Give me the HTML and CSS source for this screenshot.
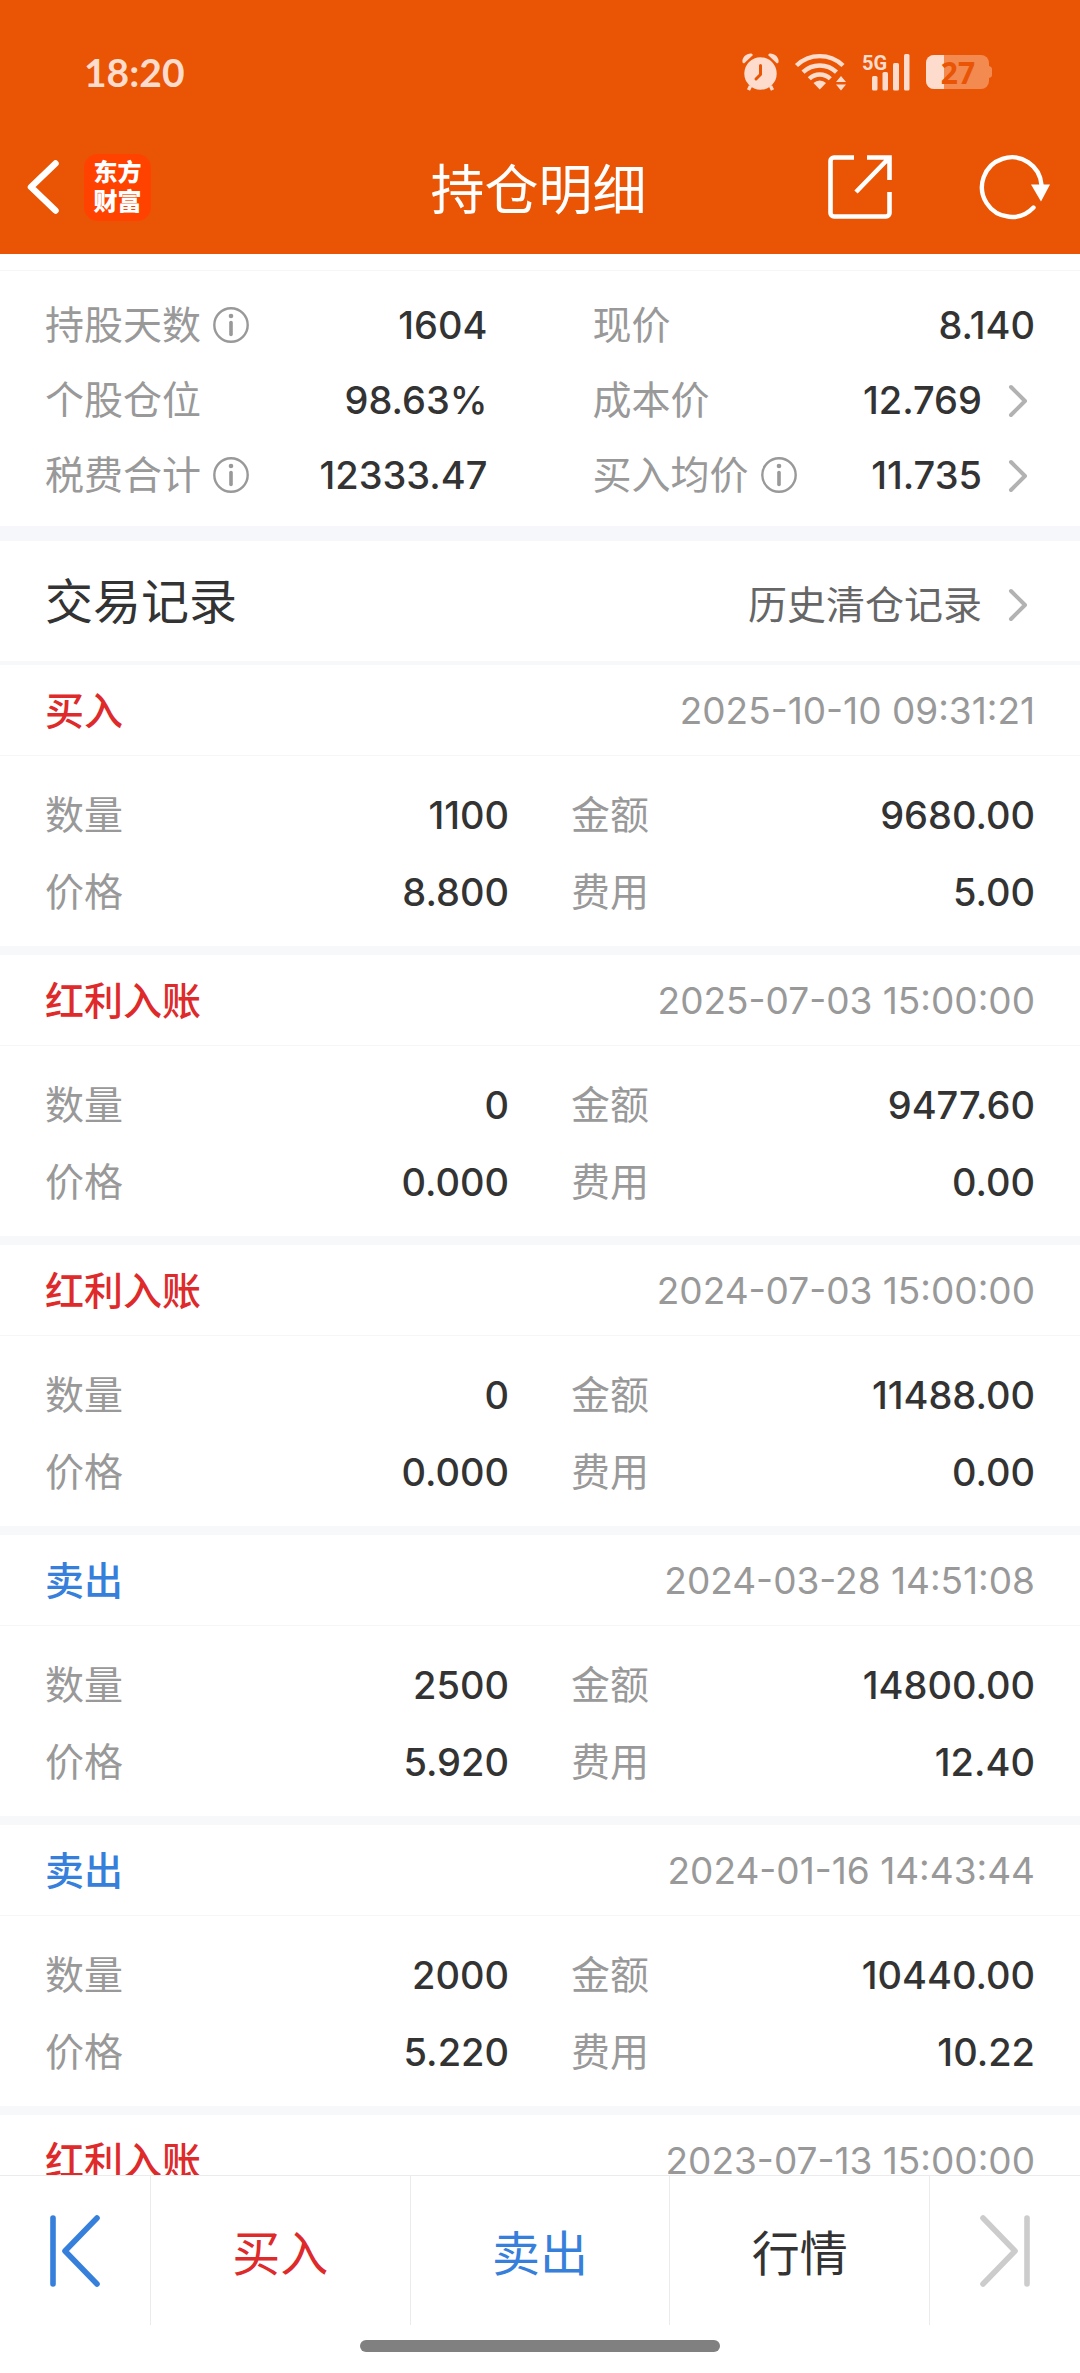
FILE: index.html
```html
<!DOCTYPE html>
<html lang="zh-CN">
  <head>
    <meta charset="UTF-8" />
    <meta name="viewport" content="width=device-width" />
    <title>持仓明细</title>
    <link rel="stylesheet" href="styles.css">
  </head>

  <body>
    <!-- shared icons -->
    <svg class="sprite" aria-hidden="true">
      <symbol id="info" viewBox="0 0 36 36">
        <circle cx="18" cy="18" r="16.7" fill="none" stroke="currentColor" stroke-width="2.4" />
        <circle cx="18" cy="9" r="2.3" fill="currentColor" />
        <path d="M18 15.5v12" stroke="currentColor" stroke-width="3.6" stroke-linecap="round" />
      </symbol>
      <symbol id="chevron" viewBox="0 0 20 34">
        <path d="M3 3l14 14L3 31" fill="none" stroke="currentColor" stroke-width="4" stroke-linecap="round" stroke-linejoin="round" />
      </symbol>
    </svg>

    <header class="header">
      <div class="status">
        <span class="time">18:20</span>
        <div class="status-icons">
          <svg width="37" height="38" viewBox="0 0 37 38">
            <g fill="currentColor">
              <circle cx="18.500" cy="20.500" r="16.200" />
              <path d="M0.500 9.500C-0.500 4 5 0 9.500 0.500L11 2 2 10.500z" />
              <path d="M36.500 9.500C37.500 4 32 0 27.500 0.500L26 2 35 10.500z" />
            </g>
            <path d="M8.500 33l-2 4M28.500 33l2 4" stroke="currentColor" stroke-width="3.400" />
            <path d="M18.500 12.500v9l-4.500 4.500" fill="none" stroke="#e95504" stroke-width="3" stroke-linecap="round" stroke-linejoin="round" />
          </svg>
          <svg width="51" height="38" viewBox="0 0 51 38">
            <g fill="none" stroke="currentColor" stroke-width="4.400">
              <path d="M1.500 12.500a33.500 33.500 0 0 1 46.500 0" />
              <path d="M8 19.200a24.200 24.200 0 0 1 33.500 0" />
              <path d="M14.300 25.800a15 15 0 0 1 21 0" />
            </g>
            <path d="M18.500 30a9 9 0 0 1 12.500 0l-6.200 6.500z" fill="currentColor" />
            <path d="M46 23l5 6H41zM46 37.500l5-6H41z" fill="currentColor" />
          </svg>
          <svg width="48" height="38" viewBox="0 0 48 38">
            <text class="net" x="0" y="17">5G</text>
            <g fill="currentColor">
              <rect x="10" y="23" width="5.500" height="14.500" rx="1.500" />
              <rect x="20.500" y="19" width="5.500" height="18.500" rx="1.500" />
              <rect x="31" y="10" width="6" height="27.500" rx="1.500" />
              <rect x="42" y="1" width="5.500" height="36.500" rx="1.500" />
            </g>
          </svg>
          <svg class="battery" width="66" height="34" viewBox="0 0 66 34">
            <rect width="63" height="34" rx="8" fill="#f38a50" />
            <path d="M63 11c2 0.500 3 1.500 3 3v6c0 1.500-1 2.500-3 3z" fill="#f38a50" />
            <path d="M8 0h10v34H8a8 8 0 0 1-8-8V8a8 8 0 0 1 8-8z" fill="currentColor" />
            <text class="level" x="32" y="29" text-anchor="middle">27</text>
          </svg>
        </div>
      </div>

      <div class="nav">
        <div class="nav-left">
          <button class="icon-btn" aria-label="返回">
            <svg width="32" height="54" viewBox="0 0 32 54">
              <path d="M28.500 3.500L4 27l24.500 23.500" fill="none" stroke="#fff" stroke-width="6.500" stroke-linecap="round" stroke-linejoin="round" />
            </svg>
          </button>
          <a class="logo" href="#">东方<br>财富</a>
        </div>
        <h1 class="nav-title">持仓明细</h1>
        <div class="nav-right">
          <button class="icon-btn" aria-label="分享">
            <svg width="64" height="64" viewBox="0 0 64 64">
              <path d="M26 2.500H6A3.500 3.500 0 0 0 2.500 6v52A3.500 3.500 0 0 0 6 61.500h52a3.500 3.500 0 0 0 3.500-3.500V37M39 2.500h22.500V25M61 3L28 37" fill="none" stroke="#fff" stroke-width="4.600" />
            </svg>
          </button>
          <button class="icon-btn" aria-label="刷新">
            <svg width="70" height="64" viewBox="0 0 70 64">
              <path d="M61.500 30A29.800 29.800 0 1 0 53.500 52.500" fill="none" stroke="#fff" stroke-width="4.400" stroke-linecap="round" />
              <path d="M51 29.500h19L61 46.500z" fill="#fff" />
            </svg>
          </button>
        </div>
      </div>
    </header>

    <main class="main">
      <dl class="summary">
        <div class="item">
          <dt>持股天数<svg class="info"><use href="#info" /></svg></dt>
          <dd>1604</dd>
        </div>
        <div class="item">
          <dt>现价</dt>
          <dd>8.140</dd>
        </div>
        <div class="item">
          <dt>个股仓位</dt>
          <dd>98.63%</dd>
        </div>
        <div class="item">
          <dt>成本价</dt>
          <dd>12.769<svg class="chevron"><use href="#chevron" /></svg></dd>
        </div>
        <div class="item">
          <dt>税费合计<svg class="info"><use href="#info" /></svg></dt>
          <dd>12333.47</dd>
        </div>
        <div class="item">
          <dt>买入均价<svg class="info"><use href="#info" /></svg></dt>
          <dd>11.735<svg class="chevron"><use href="#chevron" /></svg></dd>
        </div>
      </dl>

      <div class="section-head">
        <h2>交易记录</h2>
        <a class="history" href="#">历史清仓记录<svg class="chevron"><use href="#chevron" /></svg></a>
      </div>

      <section class="record">
        <div class="record-head">
          <h3 class="buy">买入</h3>
          <time>2025-10-10 09:31:21</time>
        </div>
        <dl class="detail">
          <div class="item"><dt>数量</dt><dd>1100</dd></div>
          <div class="item"><dt>金额</dt><dd>9680.00</dd></div>
          <div class="item"><dt>价格</dt><dd>8.800</dd></div>
          <div class="item"><dt>费用</dt><dd>5.00</dd></div>
        </dl>
      </section>

      <section class="record">
        <div class="record-head">
          <h3 class="buy">红利入账</h3>
          <time>2025-07-03 15:00:00</time>
        </div>
        <dl class="detail">
          <div class="item"><dt>数量</dt><dd>0</dd></div>
          <div class="item"><dt>金额</dt><dd>9477.60</dd></div>
          <div class="item"><dt>价格</dt><dd>0.000</dd></div>
          <div class="item"><dt>费用</dt><dd>0.00</dd></div>
        </dl>
      </section>

      <section class="record">
        <div class="record-head">
          <h3 class="buy">红利入账</h3>
          <time>2024-07-03 15:00:00</time>
        </div>
        <dl class="detail">
          <div class="item"><dt>数量</dt><dd>0</dd></div>
          <div class="item"><dt>金额</dt><dd>11488.00</dd></div>
          <div class="item"><dt>价格</dt><dd>0.000</dd></div>
          <div class="item"><dt>费用</dt><dd>0.00</dd></div>
        </dl>
      </section>

      <section class="record">
        <div class="record-head">
          <h3 class="sell">卖出</h3>
          <time>2024-03-28 14:51:08</time>
        </div>
        <dl class="detail">
          <div class="item"><dt>数量</dt><dd>2500</dd></div>
          <div class="item"><dt>金额</dt><dd>14800.00</dd></div>
          <div class="item"><dt>价格</dt><dd>5.920</dd></div>
          <div class="item"><dt>费用</dt><dd>12.40</dd></div>
        </dl>
      </section>

      <section class="record">
        <div class="record-head">
          <h3 class="sell">卖出</h3>
          <time>2024-01-16 14:43:44</time>
        </div>
        <dl class="detail">
          <div class="item"><dt>数量</dt><dd>2000</dd></div>
          <div class="item"><dt>金额</dt><dd>10440.00</dd></div>
          <div class="item"><dt>价格</dt><dd>5.220</dd></div>
          <div class="item"><dt>费用</dt><dd>10.22</dd></div>
        </dl>
      </section>

      <section class="record">
        <div class="record-head">
          <h3 class="buy">红利入账</h3>
          <time>2023-07-13 15:00:00</time>
        </div>
      </section>
    </main>

    <footer class="footer">
      <div class="tabs">
        <button class="tab prev" aria-label="上一个">
          <svg width="52" height="74" viewBox="0 0 52 74">
            <path d="M4 4v66M48 4L16 37l32 33" fill="none" stroke="currentColor" stroke-width="5.600" stroke-linecap="round" stroke-linejoin="round" />
          </svg>
        </button>
        <button class="tab buy">买入</button>
        <button class="tab sell">卖出</button>
        <button class="tab">行情</button>
        <button class="tab next" aria-label="下一个" disabled>
          <svg width="52" height="74" viewBox="0 0 52 74">
            <path d="M48 4v66M4 4l32 33L4 70" fill="none" stroke="currentColor" stroke-width="5.600" stroke-linecap="round" stroke-linejoin="round" />
          </svg>
        </button>
      </div>
      <div class="home-bar"></div>
    </footer>
  </body>
</html>
```
FILE: styles.css
```css
* {
  box-sizing: border-box;
}

body {
  margin: 0;
  height: 100vh;
  display: flex;
  flex-direction: column;
  background-color: #fff;
  color: #333;
  font-family: Inter, "Noto Sans CJK SC", sans-serif;
  font-size: 38px;
  line-height: 1.2;
}

h1, h2, h3, dl, dt, dd {
  margin: 0;
  font-weight: normal;
}

a {
  color: inherit;
  text-decoration: none;
}

button {
  border: 0;
  padding: 0;
  background: none;
  color: inherit;
  font: inherit;
}

svg {
  display: block;
  flex: none;
  overflow: visible;
}

.sprite {
  position: absolute;
  width: 0;
  height: 0;
}

/* header */

.header {
  background-color: #e95504;
  color: #fff;
  padding-bottom: 24px;
}

.status {
  display: flex;
  justify-content: space-between;
  align-items: center;
  height: 144px;
  padding: 0 88px 0 84px;
  color: #fddccd;
}

.time {
  font-family: Lato, sans-serif;
  font-weight: bold;
  font-size: 39px;
}

.status-icons {
  display: flex;
  align-items: center;
  gap: 16px;
}

.net {
  fill: currentColor;
  font-family: Roboto, sans-serif;
  font-weight: bold;
  font-size: 20px;
}

.level {
  fill: #e95504;
  font-family: "Noto Sans", sans-serif;
  font-weight: bold;
  font-size: 30px;
}

.nav {
  display: grid;
  grid-template-columns: 1fr auto 1fr;
  align-items: center;
  height: 86px;
  padding: 0 30px 0 27px;
}

.nav-left,
.nav-right {
  display: flex;
  align-items: center;
}

.nav-left {
  gap: 25px;
}

.nav-right {
  justify-content: flex-end;
  gap: 88px;
}

.nav-title {
  font-family: "Noto Sans CJK SC", sans-serif;
  font-size: 54px;
  line-height: 80px;
}

.logo {
  width: 67px;
  height: 67px;
  padding-top: 4px;
  border-radius: 14px;
  background-color: #ff4200;
  font-weight: 900;
  font-size: 24px;
  line-height: 29px;
  text-align: center;
}

/* content */

.main {
  flex: 1;
  min-height: 0;
  overflow: hidden;
  padding-top: 16px;
}

.item {
  display: flex;
  justify-content: space-between;
  align-items: center;
}

.item dt {
  display: flex;
  align-items: center;
  gap: 12px;
  color: #999;
  font-size: 39px;
}

.item dd {
  display: flex;
  align-items: center;
  font-weight: 500;
}

.info {
  width: 36px;
  height: 36px;
}

.chevron {
  width: 20px;
  height: 34px;
  margin-left: 26px;
  margin-right: 7px;
  color: #b2b2b2;
}

.summary {
  display: grid;
  grid-template-columns: 1fr 1fr;
  grid-auto-rows: 75px;
  column-gap: 105px;
  padding: 17px 45px 13px;
  border-top: 1px solid #f5f6f7;
}

.section-head {
  display: flex;
  justify-content: space-between;
  align-items: baseline;
  padding: 33px 45px 31px;
  border-top: 15px solid #f5f7fa;
  border-bottom: 4px solid #f7f8f9;
}

.section-head h2 {
  font-size: 48px;
  line-height: 56px;
}

.history {
  display: flex;
  align-items: center;
  color: #666;
  font-size: 39px;
}

.record {
  border-bottom: 9px solid #f6f8fa;
}

.record-head {
  display: flex;
  justify-content: space-between;
  align-items: center;
  height: 91px;
  padding: 2px 45px 0;
  border-bottom: 1px solid #f5f6f7;
}

.record-head h3 {
  font-size: 39px;
  font-weight: 500;
}

.record-head time {
  color: #999;
  font-size: 37px;
}

.detail {
  display: grid;
  grid-template-columns: 1fr 1fr;
  grid-auto-rows: 77px;
  column-gap: 62px;
  padding: 21px 45px 15px;
}

.buy {
  color: #de2a2a;
}

.sell {
  color: #3680dc;
}

/* bottom bar */

.footer {
  border-top: 1px solid #ebebeb;
  padding-bottom: 21px;
  background-color: #fff;
}

.tabs {
  display: grid;
  grid-template-columns: 151px 1fr 1fr 1fr 150px;
  height: 149px;
}

.tab {
  display: flex;
  align-items: center;
  justify-content: center;
  border-right: 1px solid #ebebeb;
  font-family: "Noto Sans CJK SC", sans-serif;
  font-size: 48px;
}

.tab:last-child {
  border-right: 0;
}

.prev {
  color: #3680dc;
}

.next {
  color: #ccc;
}

.home-bar {
  width: 360px;
  height: 12px;
  margin: 15px auto 0;
  border-radius: 6px;
  background-color: #808080;
}
```
